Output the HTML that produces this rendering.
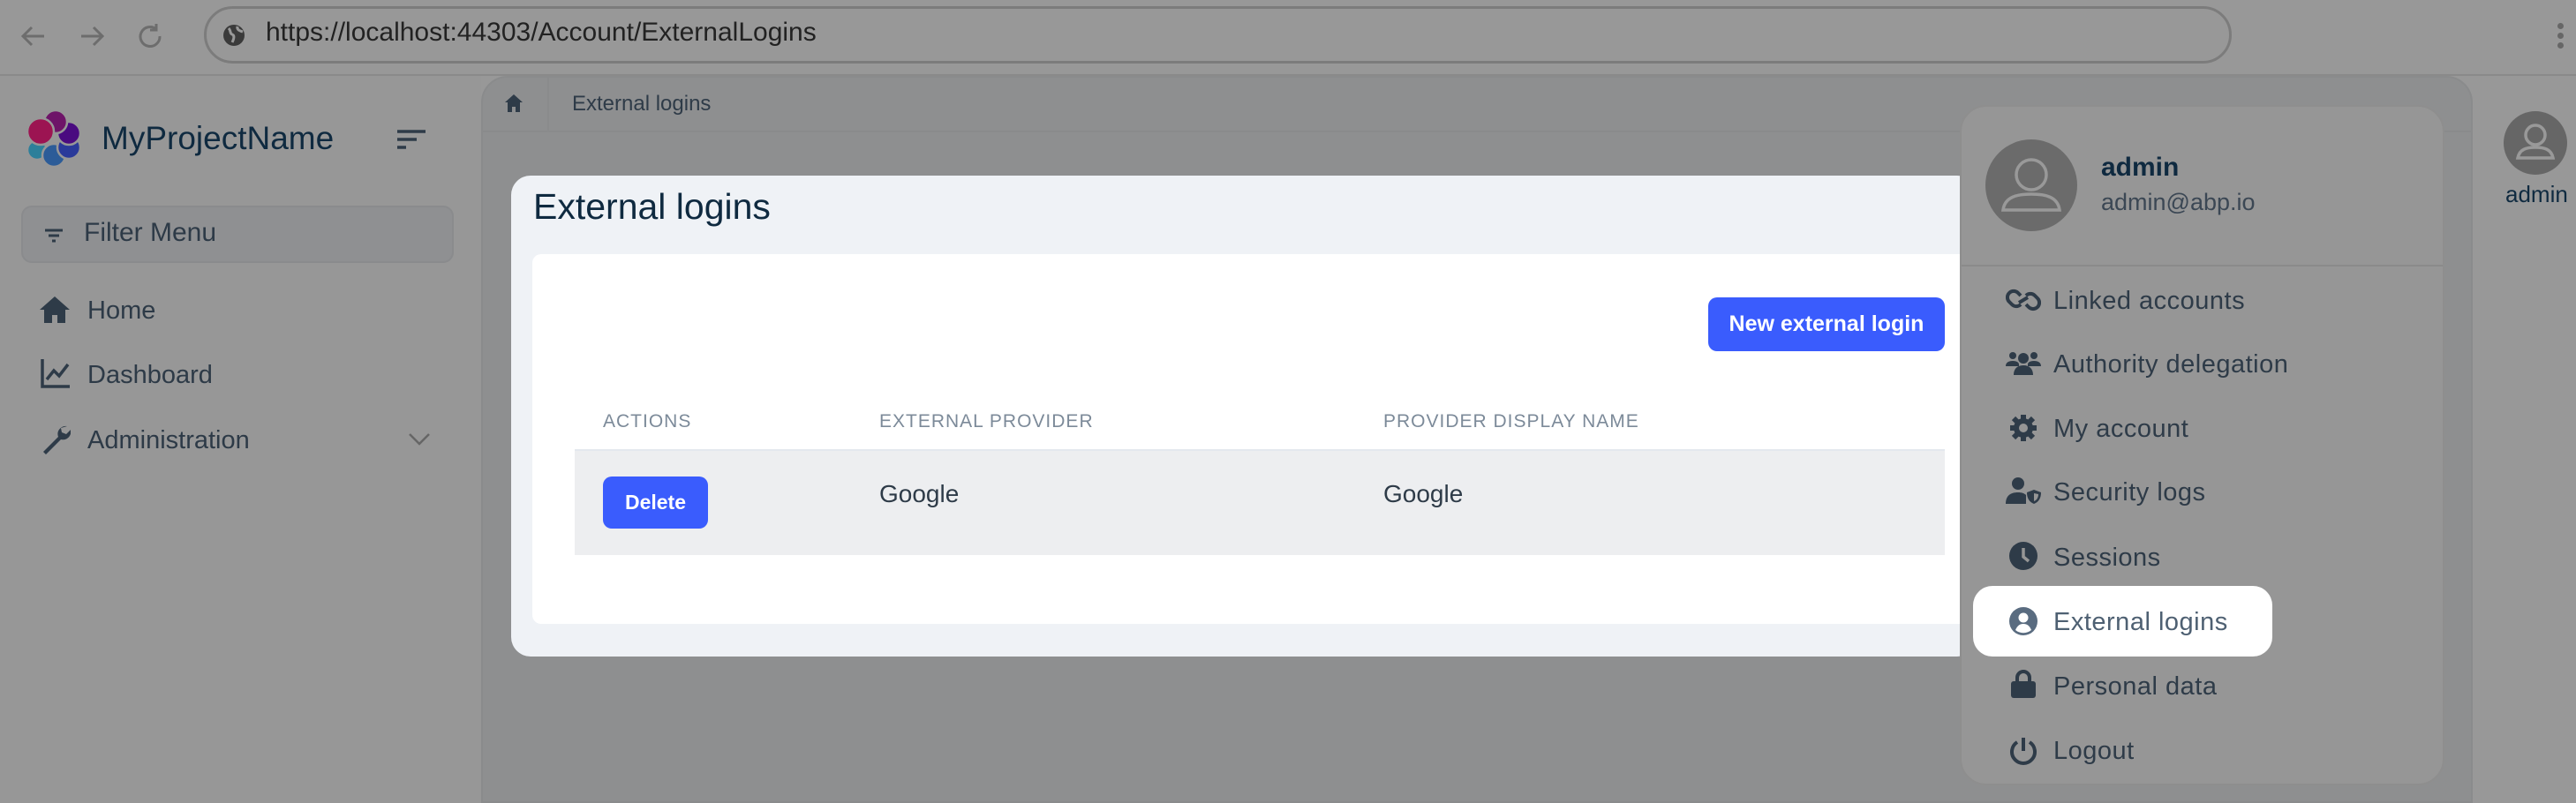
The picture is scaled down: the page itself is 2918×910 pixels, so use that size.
<!DOCTYPE html>
<html><head><meta charset="utf-8"><style>
*{margin:0;padding:0;box-sizing:border-box}
body{width:2918px;height:910px;overflow:hidden;background:#989898;font-family:"Liberation Sans",sans-serif;position:relative;color:#2e3b48}
.a{position:absolute}
.url{left:231px;top:7px;width:2297px;height:65px;border:3px solid #7c7c7c;border-radius:33px}
.side{left:0;top:86px;width:545px;height:824px;background:#979797}
.main{left:545px;top:86px;width:2256px;height:824px;background:#8e8f90;border-top-left-radius:30px;border-top-right-radius:30px;border:2px solid #8a8b8c}
.crumb{left:547px;top:88px;width:2252px;height:62px;border-bottom:2px solid #8a8b8c}
.mi{font-size:29px;color:#2d3a47}
.dd .t{position:absolute;left:2326px;font-size:29px;color:#2e3b48;letter-spacing:.5px}
svg.i{position:absolute}
</style></head><body>
<div class="a" style="left:0;top:84px;width:2918px;height:2px;background:#8a8a8a"></div>
<svg class="a" style="left:20px;top:24px" width="240" height="34" viewBox="0 0 240 34" fill="none" stroke="#6d6d6d" stroke-width="3"><path d="M30 17H6M16 7L6 17l10 10"/><path d="M72 17h24M86 7l10 10-10 10"/><path d="M157 9a11 11 0 1 0 4 8M157 3v7h-7"/></svg>
<div class="a url"></div>
<svg class="a" style="left:251px;top:26px" width="28" height="28" viewBox="0 0 28 28"><circle cx="14" cy="14" r="12" fill="#3a3a3a"/><path d="M8 6c3 3 1 6 4 7s2 5 0 9M18 4c-1 4 3 5 6 6" stroke="#989898" stroke-width="3" fill="none"/></svg>
<div class="a" style="left:301px;top:20px;font-size:30px;color:#222">https://localhost:44303/Account/ExternalLogins</div>
<div class="a" style="left:2897px;top:26px;width:7px;height:7px;border-radius:50%;background:#666;box-shadow:0 11px 0 #666,0 22px 0 #666"></div>

<div class="a side"></div>
<svg class="a" style="left:28px;top:124px" width="70" height="70" viewBox="28 124 70 70" stroke="#979797" stroke-width="2.5">
<circle cx="42" cy="170" r="11" fill="#2d7f9a"/><circle cx="61" cy="176" r="13" fill="#2c5c98"/><circle cx="78" cy="167" r="13" fill="#2a3a9a"/><circle cx="78" cy="151" r="13" fill="#4a0a80"/><circle cx="63" cy="138" r="13" fill="#6e1468"/><circle cx="46" cy="149" r="15" fill="#9c1452"/></svg>
<div class="a" style="left:115px;top:136px;font-size:37px;color:#0f2a40">MyProjectName</div>
<svg class="a" style="left:448px;top:146px" width="36" height="24"><path d="M2 3h32M2 12h22M2 21h10" stroke="#2e3b48" stroke-width="3.5"/></svg>
<div class="a" style="left:24px;top:233px;width:490px;height:65px;background:#8f9092;border:2px solid #8a8b8d;border-radius:12px"></div>
<svg class="a" style="left:50px;top:258px" width="22" height="18"><path d="M1 3h20M5 9h12M9 15h4" stroke="#2e3b48" stroke-width="3"/></svg>
<div class="a mi" style="left:95px;top:247px;font-size:30px">Filter Menu</div>
<svg class="a" style="left:44px;top:335px" width="36" height="32" viewBox="0 0 36 32"><path d="M18 1L1 16h5v15h9v-9h6v9h9V16h5z" fill="#2e3b48"/></svg>
<div class="a mi" style="left:99px;top:336px">Home</div>
<svg class="a" style="left:46px;top:406px" width="34" height="34" fill="none" stroke="#2e3b48" stroke-width="3.5"><path d="M2 1v31h31M7 24l8-10 6 6 10-13"/></svg>
<div class="a mi" style="left:99px;top:409px">Dashboard</div>
<svg class="a" style="left:46px;top:481px" width="34" height="36" viewBox="0 0 34 36"><path d="M30 2a9 9 0 0 0-10 12L3 31l3 3 17-17a9 9 0 0 0 11-11l-5 5-5-2-1-5z" fill="#2e3b48"/></svg>
<div class="a mi" style="left:99px;top:483px">Administration</div>
<svg class="a" style="left:462px;top:490px" width="26" height="16"><path d="M2 2l11 11L24 2" stroke="#666" stroke-width="2.5" fill="none"/></svg>

<div class="a main"></div>
<div class="a crumb"></div>
<svg class="a" style="left:571px;top:106px" width="22" height="22" viewBox="0 0 22 22"><path d="M11 1L1 10h3v11h5v-6h4v6h5V10h3z" fill="#2e3b48"/></svg>
<div class="a" style="left:620px;top:88px;width:2px;height:62px;background:#8a8b8c"></div>
<div class="a" style="left:648px;top:104px;font-size:24px;color:#2e3b48">External logins</div>

<svg class="a" style="left:2836px;top:126px" width="72" height="72" viewBox="0 0 72 72"><circle cx="36" cy="36" r="36" fill="#666"/><circle cx="36" cy="27" r="11" fill="none" stroke="#999" stroke-width="3.5"/><path d="M16 53c2-10 10-12 20-12s18 2 20 12z" fill="none" stroke="#999" stroke-width="3.5"/></svg>
<div class="a" style="left:2838px;top:205px;font-size:26px;color:#0f2a40">admin</div>

<div class="a" style="left:579px;top:199px;width:1660px;height:545px;background:#eff2f6;border-radius:22px"></div>
<div class="a" style="left:604px;top:211px;font-size:41px;color:#0f2a40">External logins</div>
<div class="a" style="left:603px;top:288px;width:1640px;height:419px;background:#fff;border-radius:10px"></div>
<div class="a" style="left:1935px;top:337px;width:268px;height:61px;background:#3a5cfd;border-radius:10px;color:#fff;font-weight:bold;font-size:25px;text-align:center;line-height:61px">New external login</div>
<div class="a" style="left:683px;top:466px;font-size:21px;color:#7c8a99;letter-spacing:1px">ACTIONS</div>
<div class="a" style="left:996px;top:466px;font-size:21px;color:#7c8a99;letter-spacing:1px">EXTERNAL PROVIDER</div>
<div class="a" style="left:1567px;top:466px;font-size:21px;color:#7c8a99;letter-spacing:1px">PROVIDER DISPLAY NAME</div>
<div class="a" style="left:651px;top:509px;width:1552px;height:120px;background:#edeef0;border-top:2px solid #e4e8ee"></div>
<div class="a" style="left:683px;top:540px;width:119px;height:59px;background:#3a5cfd;border-radius:10px;color:#fff;font-weight:bold;font-size:23px;text-align:center;line-height:59px">Delete</div>
<div class="a" style="left:996px;top:544px;font-size:28px;color:#2e3b48">Google</div>
<div class="a" style="left:1567px;top:544px;font-size:28px;color:#2e3b48">Google</div>

<div class="a" style="left:2220px;top:119px;width:549px;height:771px;background:#969696;border:2px solid #8e8e8e;border-radius:30px"></div>
<svg class="a" style="left:2249px;top:158px" width="104" height="104" viewBox="0 0 104 104"><circle cx="52" cy="52" r="52" fill="#6b6b6b"/><circle cx="52" cy="40" r="17" fill="none" stroke="#999" stroke-width="3.5"/><path d="M20 80c2-15 16-18 32-18s30 3 32 18z" fill="none" stroke="#999" stroke-width="3.5"/></svg>
<div class="a" style="left:2380px;top:173px;font-size:30px;font-weight:bold;color:#0f2a40">admin</div>
<div class="a" style="left:2380px;top:214px;font-size:27px;color:#3b4754">admin@abp.io</div>
<div class="a" style="left:2222px;top:300px;width:545px;height:2px;background:#8a8a8a"></div>
<div class="a" style="left:2235px;top:664px;width:339px;height:80px;background:#fff;border-radius:22px"></div>
<div class="dd">
<svg class="i" style="left:2272px;top:327px" width="40" height="26" viewBox="0 0 40 26" fill="none" stroke="#2e3b48" stroke-width="4"><path d="M17 8l-3-3a7 7 0 0 0-10 10l3 3a7 7 0 0 0 10 0"/><path d="M23 18l3 3a7 7 0 0 0 10-10l-3-3a7 7 0 0 0-10 0"/><path d="M15 16l10-6"/></svg>
<div class="t" style="top:325px">Linked accounts</div>
<svg class="i" style="left:2272px;top:397px" width="40" height="30" viewBox="0 0 40 30" fill="#2e3b48"><circle cx="8" cy="6" r="4"/><circle cx="32" cy="6" r="4"/><circle cx="20" cy="9" r="6"/><path d="M0 18c0-4 3-6 8-6s7 2 7 4v2zM40 18c0-4-3-6-8-6s-7 2-7 4v2zM9 28c0-7 4-11 11-11s11 4 11 11z"/></svg>
<div class="t" style="top:397px">Authority delegation</div>
<svg class="i" style="left:2276px;top:469px" width="32" height="32" viewBox="0 0 32 32"><circle cx="16" cy="16" r="11" fill="#2e3b48"/><g stroke="#2e3b48" stroke-width="6"><path d="M16 1v30M1 16h30M5 5l22 22M27 5L5 27"/></g><circle cx="16" cy="16" r="5" fill="#969696"/></svg>
<div class="t" style="top:470px">My account</div>
<svg class="i" style="left:2272px;top:540px" width="40" height="32" viewBox="0 0 40 32" fill="#2e3b48"><circle cx="14" cy="8" r="7"/><path d="M0 31c0-9 5-13 14-13 4 0 7 1 9 3v10z"/><path d="M32 15l8 3c0 7-3 11-8 13-5-2-8-6-8-13z"/><path d="M32 19v9c3-1 5-4 5-8z" fill="#969696"/></svg>
<div class="t" style="top:542px">Security logs</div>
<svg class="i" style="left:2276px;top:614px" width="32" height="32" viewBox="0 0 32 32"><circle cx="16" cy="16" r="16" fill="#2e3b48"/><path d="M16 7v10l6 5" stroke="#969696" stroke-width="3.5" fill="none"/></svg>
<div class="t" style="top:616px">Sessions</div>
<svg class="i" style="left:2276px;top:688px" width="32" height="32" viewBox="0 0 32 32"><circle cx="16" cy="16" r="16" fill="#5a6c80"/><circle cx="16" cy="12" r="5.5" fill="#fff"/><path d="M7 26c2-5 5-7 9-7s7 2 9 7a14 14 0 0 1-18 0z" fill="#fff"/></svg>
<div class="t" style="top:689px;color:#4e6072">External logins</div>
<svg class="i" style="left:2278px;top:759px" width="28" height="32" viewBox="0 0 28 32"><path d="M7 14V9a7 7 0 0 1 14 0v5" stroke="#2e3b48" stroke-width="4" fill="none"/><rect x="0" y="13" width="28" height="19" rx="3" fill="#2e3b48"/></svg>
<div class="t" style="top:762px">Personal data</div>
<svg class="i" style="left:2276px;top:834px" width="32" height="34" viewBox="0 0 32 34" fill="none" stroke="#2e3b48" stroke-width="4"><path d="M16 2v15"/><path d="M9 7a13 13 0 1 0 14 0"/></svg>
<div class="t" style="top:835px">Logout</div>
</div>
</body></html>
